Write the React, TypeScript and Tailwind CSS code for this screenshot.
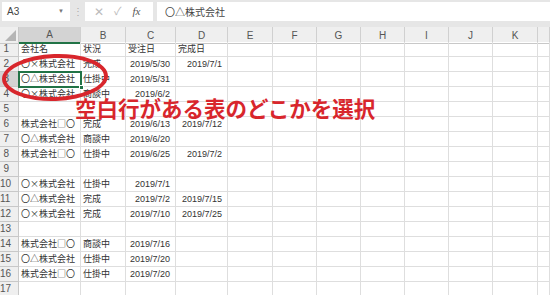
import React from 'react';

const cols = ['A', 'B', 'C', 'D', 'E', 'F', 'G', 'H', 'I', 'J', 'K', ''];

type Row = [string, string, string, string] | null;

const rows: Row[] = [
  ['会社名', '状況', '受注日', '完成日'],
  ['〇×株式会社', '完成', '2019/5/30', '2019/7/1'],
  ['〇△株式会社', '仕掛中', '2019/5/31', ''],
  ['〇×株式会社', '商談中', '2019/6/2', ''],
  null,
  ['株式会社□〇', '完成', '2019/6/13', '2019/7/12'],
  ['〇△株式会社', '商談中', '2019/6/20', ''],
  ['株式会社□〇', '仕掛中', '2019/6/25', '2019/7/2'],
  null,
  ['〇×株式会社', '仕掛中', '2019/7/1', ''],
  ['〇△株式会社', '完成', '2019/7/2', '2019/7/15'],
  ['〇×株式会社', '完成', '2019/7/10', '2019/7/25'],
  null,
  ['株式会社□〇', '商談中', '2019/7/16', ''],
  ['〇△株式会社', '仕掛中', '2019/7/20', ''],
  ['株式会社□〇', '仕掛中', '2019/7/20', ''],
  null,
];

const gridCols =
  'grid grid-cols-[19px_62px_45px_50px_52px_45px_44px_44px_44px_44px_44px_45px_1fr]';

function FormulaBar() {
  return (
    <div className="flex h-[27px] items-start bg-[#e6e6e6] pt-[2px] text-[10px] text-[#444]">
      <div className="ml-[2px] flex h-[19px] w-[68px] items-center justify-between bg-white pl-[5px] pr-[6px]">
        <span>A3</span>
        <span className="text-[6px] text-[#777]">▼</span>
      </div>
      <div className="flex h-[19px] w-[15px] items-center justify-center text-[#aaa]">⋮</div>
      <div className="flex h-[19px] w-[68px] items-center bg-white text-[#bbb]">
        <span className="ml-[9px] text-[12px]">✕</span>
        <span className="ml-[10px] text-[11px]">✓</span>
        <span className="ml-[11px] font-['Liberation_Serif',serif] text-[11px] italic text-[#555]">fx</span>
      </div>
      <div className="ml-[4px] flex h-[19px] flex-1 items-center bg-white pl-[8px] font-['Noto_Sans_CJK_JP',sans-serif]">
        〇△株式会社
      </div>
    </div>
  );
}

export default function App() {
  return (
    <div className="relative h-[295px] w-[550px] overflow-hidden bg-white font-['Liberation_Sans','Noto_Sans_CJK_JP',sans-serif] text-[9px] text-[#333]">
      <FormulaBar />

      {/* column headers */}
      <div className={`${gridCols} h-[15px] bg-[#efefef] text-[10px] text-[#555]`}>
        <div className="relative border-r border-b border-[#c8c8c8]">
          <div className="absolute bottom-[2px] right-[2px] h-0 w-0 border-l-[11px] border-l-transparent [border-bottom:11px_solid_#b5b5b5]" />
        </div>
        {cols.map((c, i) => (
          <div
            key={i}
            className={`flex items-center justify-center border-r border-[#d0d0d0] ${
              c === 'A' ? 'border-b-2 border-b-[#217346] bg-[#d3d3d3]' : 'border-b border-b-[#c8c8c8]'
            }`}
          >
            {c}
          </div>
        ))}
      </div>

      {/* rows */}
      {rows.map((r, ri) => (
        <div key={ri} className={`${gridCols} h-[15px]`}>
          <div
            className={`border-r border-b border-[#c8c8c8] pr-[9px] text-right text-[10px] leading-[14px] text-[#555] ${
              ri === 2 ? 'bg-[#d3d3d3]' : 'bg-[#efefef]'
            }`}
          >
            {ri + 1}
          </div>
          {cols.map((_, ci) => {
            const v = r && ci < 4 ? r[ci] : '';
            const isDate = ri > 0 && (ci === 2 || ci === 3);
            return (
              <div
                key={ci}
                className={`overflow-visible whitespace-nowrap border-r border-b border-[#dedede] leading-[14px] ${
                  isDate ? 'pr-[5px] text-right' : "pl-[2px] font-['Noto_Sans_CJK_JP',sans-serif]"
                }`}
              >
                {v}
              </div>
            );
          })}
        </div>
      ))}

      {/* selected cell A3 */}
      <div className="absolute left-[18px] top-[71px] h-[17px] w-[64px] border-2 border-[#217346]" />
      <div className="absolute left-[79px] top-[85px] h-[5px] w-[5px] border border-white bg-[#217346]" />

      {/* red ellipse */}
      <div className="absolute left-[2px] top-[54px] h-[47px] w-[106px] -rotate-2 rounded-[50%] border-[4px] border-[#d8262c]" />

      {/* caption */}
      <div className="absolute left-[75px] top-[97px] font-['Noto_Sans_CJK_JP',sans-serif] text-[21.5px] font-bold leading-none text-[#d8262c]">
        空白行がある表のどこかを選択
      </div>
    </div>
  );
}
